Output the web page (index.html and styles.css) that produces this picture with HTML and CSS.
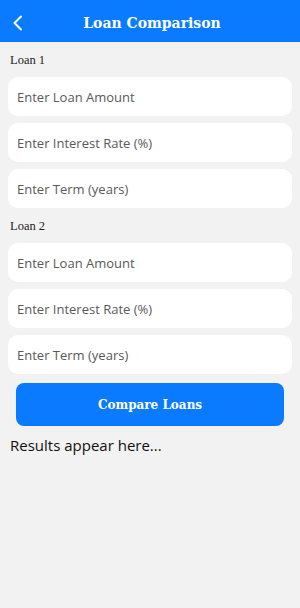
FILE: index.html
```html
<!DOCTYPE html>
<html lang="en">
<head>
  <meta charset="UTF-8">
  <meta name="viewport" content="width=device-width, initial-scale=1.0">
  <title>Loan Comparison</title>
  <link rel="stylesheet" href="styles.css">
</head>
<body>
  <div class="header">
    <button class="back" aria-label="Back">
      <svg width="12" height="16" viewBox="0 0 12 16"><path d="M9 1.5 L2.5 8 L9 14.5" fill="none" stroke="#fff" stroke-width="2" stroke-linecap="round" stroke-linejoin="round"/></svg>
    </button>
    <h1>Loan Comparison</h1>
  </div>
  <div class="container">
    <p class="label">Loan 1</p>
    <div class="fields">
      <input type="text" placeholder="Enter Loan Amount">
      <input type="text" placeholder="Enter Interest Rate (%)">
      <input type="text" placeholder="Enter Term (years)">
    </div>
    <p class="label">Loan 2</p>
    <div class="fields">
      <input type="text" placeholder="Enter Loan Amount">
      <input type="text" placeholder="Enter Interest Rate (%)">
      <input type="text" placeholder="Enter Term (years)">
    </div>
    <button class="compare">Compare Loans</button>
    <p class="results">Results appear here...</p>
  </div>
</body>
</html>
```

FILE: styles.css
```css
body {
  margin: 0;
  padding: 0;
  background-color: #f2f2f2;
  font-family: 'Open Sans', sans-serif;
}
.header {
  height: 42px;
  background-color: #0a7bff;
  display: flex;
  align-items: center;
  justify-content: center;
  position: relative;
}
.header h1 {
  margin: 0 0 0 4px;
  padding-top: 3px;
  color: #fff;
  font-family: 'DejaVu Serif', serif;
  font-size: 14px;
  font-weight: bold;
}
.back {
  position: absolute;
  left: 12px;
  top: 15px;
  background: none;
  border: none;
  padding: 0;
  display: flex;
}
.container {
  padding: 0 8px;
}
.label {
  margin: 0;
  padding: 11px 2px 0;
  height: 24px;
  font-family: 'Liberation Serif', serif;
  font-size: 12.5px;
  color: #222;
}
.fields {
  display: flex;
  flex-direction: column;
  gap: 7px;
}
.fields input {
  box-sizing: border-box;
  height: 39px;
  width: 100%;
  border: none;
  border-radius: 10px;
  background-color: #fff;
  padding: 0 9px;
  font-family: 'Open Sans', sans-serif;
  font-size: 13px;
  outline: none;
}
.fields input::placeholder {
  color: #595959;
}
.compare {
  display: block;
  width: 268px;
  height: 43px;
  margin: 9px auto 0;
  background-color: #0a7bff;
  color: #fff;
  border: none;
  border-radius: 8px;
  font-family: 'DejaVu Serif', serif;
  font-weight: bold;
  font-size: 12px;
}
.results {
  margin: 9px 2px 0;
  font-family: 'Open Sans', sans-serif;
  font-size: 15px;
  color: #111;
}
```
